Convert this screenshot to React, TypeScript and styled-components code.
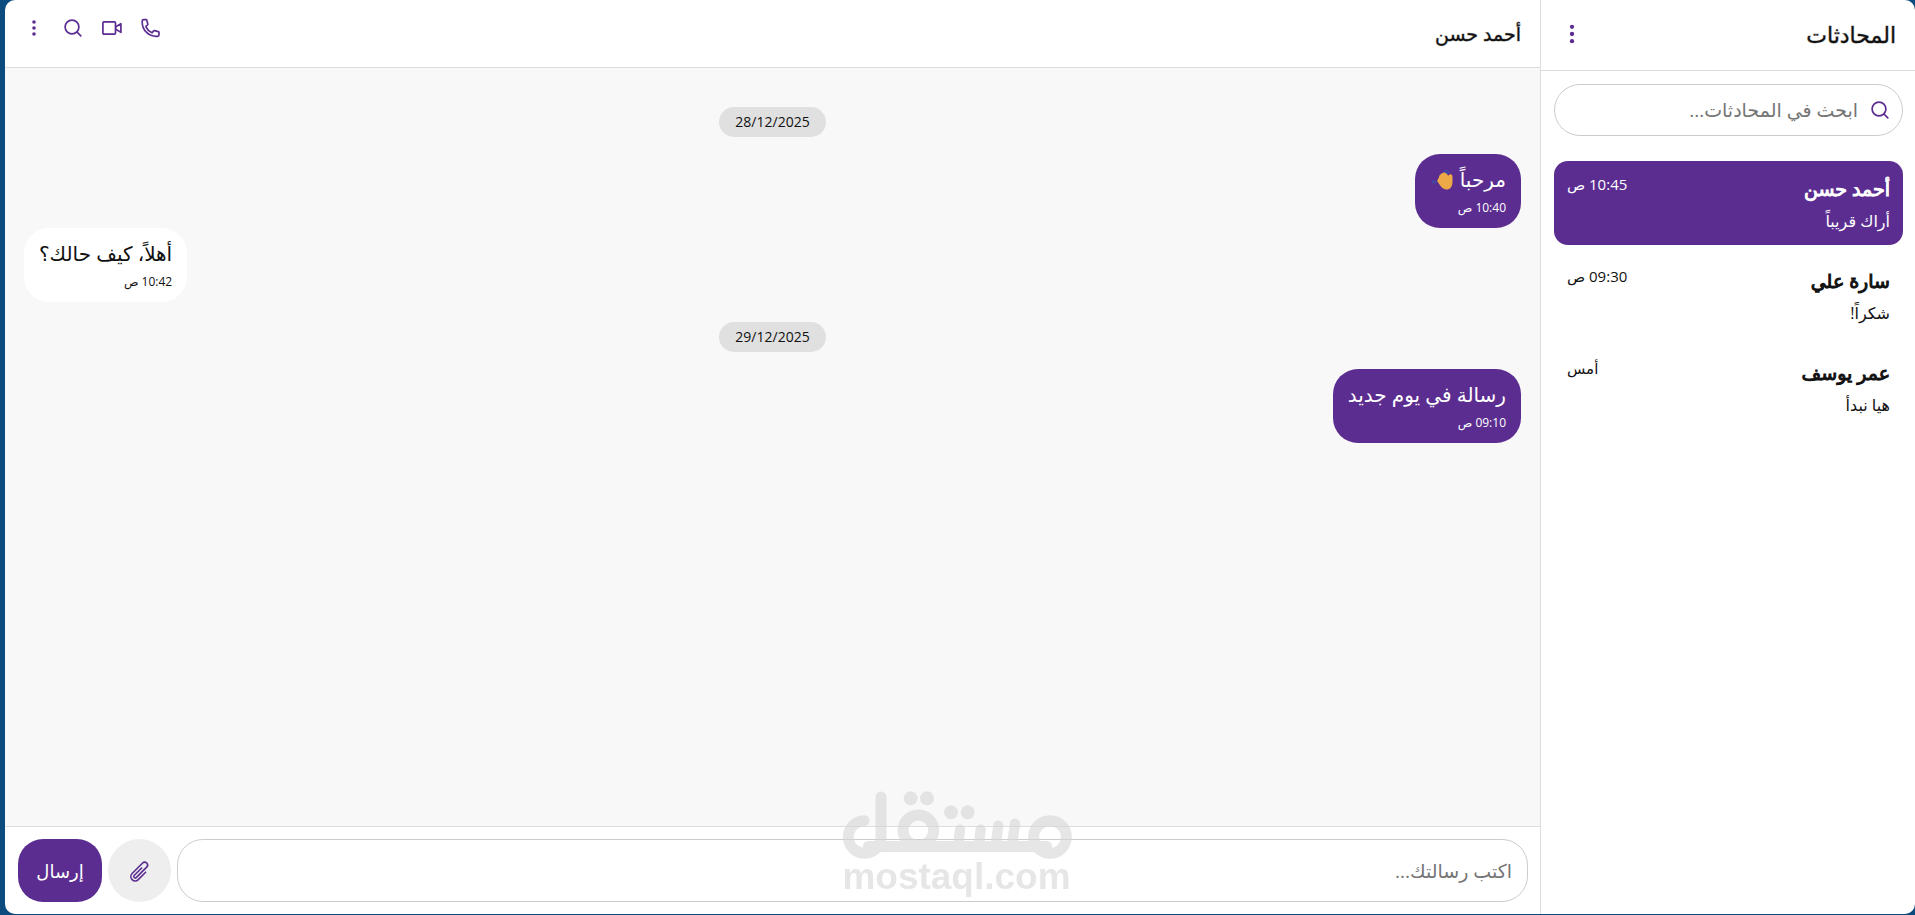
import React, { useState } from "react";
import styled, { createGlobalStyle } from "styled-components";

const purple = "#5c2d91";
const line = "#dddddd";
const fonts = `"Open Sans", "Noto Sans", "DejaVu Sans", sans-serif`;

const GlobalStyle = createGlobalStyle`
  *, *::before, *::after { box-sizing: border-box; }
  body {
    margin: 0;
    background: #0c4b7e;
    color: #111111;
    font-family: ${fonts};
  }
  button, input { font-family: inherit; color: inherit; }
  h1, h2, p, ul, ol { margin: 0; padding: 0; }
  ul, ol { list-style: none; }
`;

const Frame = styled.div`
  padding: 0 0 1px 5px;
  height: 100vh;
`;

const Shell = styled.div`
  display: flex;
  height: 100%;
  border-radius: 10px;
  overflow: hidden;
  background: #ffffff;
`;

const Sidebar = styled.aside`
  flex: 0 0 375px;
  border-inline-end: 1px solid ${line};
`;

const SidebarHeader = styled.header`
  display: flex;
  align-items: center;
  justify-content: space-between;
  height: 71px;
  padding: 0 19px 2px;
  border-bottom: 1px solid ${line};
`;

const SidebarTitle = styled.h1`
  font-size: 22px;
  font-weight: 500;
  line-height: 32px;
  -webkit-text-stroke: 1px rgba(17, 17, 17, 0.4);
`;

const IconButton = styled.button`
  display: grid;
  place-items: center;
  width: 24px;
  height: 24px;
  padding: 0;
  border: 0;
  background: none;
  color: ${purple};
  cursor: pointer;
`;

const SearchField = styled.label`
  display: flex;
  align-items: center;
  gap: 12px;
  height: 52px;
  margin: 13px 12px 25px 13px;
  padding: 0 12px;
  border: 1px solid #cccccc;
  border-radius: 26px;
  color: ${purple};
`;

const SearchInput = styled.input`
  flex: 1;
  min-width: 0;
  padding: 0;
  border: 0;
  outline: 0;
  background: none;
  color: #111111;
  font-size: 19px;
  &::placeholder { color: #757575; opacity: 1; }
`;

const ChatList = styled.ul`
  display: flex;
  flex-direction: column;
  gap: 8px;
  padding: 0 12px 0 13px;
`;

const ChatButton = styled.button<{ $active: boolean }>`
  display: flex;
  justify-content: space-between;
  align-items: flex-start;
  width: 100%;
  height: 84px;
  padding: 13px;
  border: 0;
  border-radius: 14px;
  background: ${(p) => (p.$active ? purple : "transparent")};
  color: ${(p) => (p.$active ? "#ffffff" : "#111111")};
  text-align: start;
  cursor: pointer;
`;

const ChatText = styled.span`
  display: flex;
  flex-direction: column;
  gap: 5px;
`;

const ChatName = styled.strong`
  font-size: 19px;
  font-weight: 500;
  line-height: 30px;
  -webkit-text-stroke: 1px currentColor;
`;

const ChatPreview = styled.span`
  font-size: 16px;
  line-height: 24px;
`;

const ChatTime = styled.span`
  font-size: 15px;
  line-height: 20px;
`;

const Conversation = styled.main`
  flex: 1;
  min-width: 0;
  display: flex;
  flex-direction: column;
`;

const ConversationHeader = styled.header`
  display: flex;
  justify-content: space-between;
  height: 68px;
  padding: 16px 19px 16px 17px;
  border-bottom: 1px solid ${line};
`;

const ContactName = styled.h2`
  font-size: 19px;
  font-weight: 500;
  line-height: 36px;
  -webkit-text-stroke: 1px rgba(17, 17, 17, 0.4);
`;

const Actions = styled.div`
  display: flex;
  gap: 15px;
`;

const Messages = styled.ol`
  flex: 1;
  display: flex;
  flex-direction: column;
  align-items: flex-start;
  padding: 19px;
  overflow: hidden;
  background: #f8f8f8;
`;

const DateChip = styled.li`
  align-self: center;
  margin: 20px 0 17px;
  padding: 0 16px;
  border-radius: 15px;
  background: #e0e0e0;
  font-size: 14px;
  line-height: 30px;
`;

const Bubble = styled.li<{ $own: boolean }>`
  align-self: ${(p) => (p.$own ? "flex-start" : "flex-end")};
  display: flex;
  flex-direction: column;
  gap: 2px;
  padding: 10px 15px;
  border-radius: 25px;
  background: ${(p) => (p.$own ? purple : "#ffffff")};
  color: ${(p) => (p.$own ? "#ffffff" : "#111111")};
`;

const BubbleText = styled.p`
  display: flex;
  align-items: center;
  gap: 6px;
  font-size: 20px;
  line-height: 32px;
`;

const BubbleTime = styled.time`
  font-size: 12px;
  line-height: 20px;
`;

const Composer = styled.form`
  display: flex;
  gap: 6px;
  padding: 12px 12px 12px 13px;
  border-top: 1px solid ${line};
`;

const MessageInput = styled.input`
  flex: 1;
  min-width: 0;
  height: 63px;
  padding: 0 15px;
  border: 1px solid #cccccc;
  border-radius: 26px;
  outline: 0;
  background: none;
  font-size: 19px;
  &::placeholder { color: #757575; opacity: 1; }
`;

const AttachButton = styled.button`
  display: grid;
  place-items: center;
  width: 63px;
  height: 63px;
  padding: 2px 0 0;
  border: 0;
  border-radius: 50%;
  background: #eeeeee;
  color: ${purple};
  cursor: pointer;
`;

const SendButton = styled.button`
  width: 84px;
  height: 63px;
  padding: 0;
  border: 0;
  border-radius: 25px;
  background: ${purple};
  color: #ffffff;
  font-size: 18px;
  cursor: pointer;
`;

const Watermark = styled.div`
  position: fixed;
  inset-inline: 0;
  bottom: 20px;
  display: flex;
  flex-direction: column;
  align-items: center;
  padding-right: 2px;
  opacity: 0.6;
  color: #d6d6d6;
  pointer-events: none;
`;

const WatermarkText = styled.span`
  font: bold 37px/36px "Liberation Sans", sans-serif;
`;

type IconProps = { size?: number; box?: number; children?: React.ReactNode };

const Icon = ({ size = 20, box = 20, children }: IconProps) => (
  <svg width={size} height={size} viewBox={`0 0 ${box} ${box}`} fill="none" stroke="currentColor"
    strokeWidth="1.7" strokeLinecap="round" strokeLinejoin="round" aria-hidden="true">
    {children}
  </svg>
);

const DotsIcon = ({ size }: { size?: number }) => (
  <Icon size={size}>
    <g fill="currentColor" stroke="none">
      <circle cx="10" cy="4" r="1.8" />
      <circle cx="10" cy="10" r="1.8" />
      <circle cx="10" cy="16" r="1.8" />
    </g>
  </Icon>
);

const SearchIcon = () => (
  <Icon>
    <circle cx="9" cy="9" r="6.9" />
    <path d="M14 14l3.8 3.8" />
  </Icon>
);

const VideoIcon = () => (
  <Icon>
    <rect x="0.9" y="3.9" width="12.6" height="12.2" rx="1" />
    <path d="M13.9 8.800l5-3.200v8.800l-5-3.200" />
  </Icon>
);

const PhoneIcon = () => (
  <Icon>
    <path d="M1.2 4.2c0 7.800 6.300 14.100 14.100 14.100h1.200c.8 0 1.500-.7 1.500-1.500v-2.200c0-.5-.3-.9-.8-1l-3.700-.9c-.4-.1-.9.1-1.100.4l-.8 1.100c-.2.3-.7.5-1 .3a11 11 0 0 1-5.600-5.600c-.1-.4 0-.8.3-1l1.100-.8c.3-.3.5-.7.4-1.100L5.900 2.500c-.1-.5-.5-.8-1-.8H2.700c-.8 0-1.500.7-1.500 1.500z" />
  </Icon>
);

const ClipIcon = () => (
  <Icon size={23} box={24}>
    <path d="m18.375 12.739-7.693 7.693a4.5 4.5 0 0 1-6.364-6.364l10.94-10.94A3 3 0 1 1 19.5 7.372L8.552 18.32m.009-.01-.01.01m5.699-9.941-7.81 7.81a1.5 1.5 0 0 0 2.112 2.13" />
  </Icon>
);

const WavingHand = () => (
  <svg width="24" height="22" viewBox="-2 0 24 22" aria-hidden="true">
    <path d="M7.5 6.5c2-2.4 4.6-3.7 6.5-2.5l2.3 2.7c.5-.9 1.4-1.7 3-1.3.9.2 1.200 1.200 1.200 3 0 4.700.5 9.500-3.500 11.600-3 1.600-6.500-.2-8.700-3.200L5.500 12.500c-.7-1 0-1.600.7-2-.4-1.300.2-1.600.9-1.700-.3-1 0-1.700.4-2.300z" fill="#eda847" />
    <path d="M12 2.2c2-1.6 4.800-.6 5 1.800M13 4c1.200-.8 2.300-.3 2.700.8M1 11.500c-.2 1.500.3 2.700 1.300 3.500M3.200 11.800c0 .9.300 1.600.9 2.200" fill="none" stroke="#1b6cc0" strokeWidth="0.9" />
  </svg>
);

const WatermarkLogo = () => (
  <svg width="230" height="68" viewBox="126 62 690 204" fill="none" stroke="currentColor"
    strokeWidth="33" strokeLinecap="round" aria-hidden="true">
    <path d="M192 151A49 49 0 1 0 243 200V80" />
    <path d="M205 228.5H740" />
    <circle cx="355" cy="180" r="46" />
    <circle cx="750" cy="200" r="49" />
    <path d="M480 178l-5 46M542 178l-5 46M595 166l-8 58M645 160l-9 64" strokeWidth="31" />
    <g fill="currentColor" stroke="none">
      <circle cx="332" cy="84" r="21" />
      <circle cx="381" cy="84" r="21" />
      <circle cx="453" cy="126" r="21" />
      <circle cx="503" cy="126" r="21" />
    </g>
  </svg>
);

const chats = [
  { name: "أحمد حسن", preview: "أراك قريباً", time: "10:45 ص" },
  { name: "سارة علي", preview: "شكراً!", time: "09:30 ص" },
  { name: "عمر يوسف", preview: "هيا نبدأ", time: "أمس" },
];

const days = [
  {
    date: "28/12/2025",
    messages: [
      { text: "مرحباً", wave: true, time: "10:40 ص", own: true },
      { text: "أهلاً، كيف حالك؟", wave: false, time: "10:42 ص", own: false },
    ],
  },
  {
    date: "29/12/2025",
    messages: [{ text: "رسالة في يوم جديد", wave: false, time: "09:10 ص", own: true }],
  },
];

export default function App() {
  const [active, setActive] = useState(0);

  return (
    <>
      <GlobalStyle />
      <Frame>
        <Shell dir="rtl" lang="ar">
          <Sidebar>
            <SidebarHeader>
              <SidebarTitle>المحادثات</SidebarTitle>
              <IconButton type="button" aria-label="القائمة"><DotsIcon size={24} /></IconButton>
            </SidebarHeader>
            <SearchField>
              <SearchIcon />
              <SearchInput type="text" placeholder="ابحث في المحادثات..." aria-label="ابحث في المحادثات" />
            </SearchField>
            <ChatList>
              {chats.map((chat, i) => (
                <li key={chat.name}>
                  <ChatButton type="button" $active={i === active} onClick={() => setActive(i)}>
                    <ChatText>
                      <ChatName>{chat.name}</ChatName>
                      <ChatPreview>{chat.preview}</ChatPreview>
                    </ChatText>
                    <ChatTime>{chat.time}</ChatTime>
                  </ChatButton>
                </li>
              ))}
            </ChatList>
          </Sidebar>

          <Conversation>
            <ConversationHeader>
              <ContactName>{chats[active].name}</ContactName>
              <Actions>
                <IconButton type="button" aria-label="مكالمة صوتية"><PhoneIcon /></IconButton>
                <IconButton type="button" aria-label="مكالمة فيديو"><VideoIcon /></IconButton>
                <IconButton type="button" aria-label="بحث"><SearchIcon /></IconButton>
                <IconButton type="button" aria-label="المزيد"><DotsIcon size={20} /></IconButton>
              </Actions>
            </ConversationHeader>
            <Messages>
              {days.map((day) => (
                <React.Fragment key={day.date}>
                  <DateChip>{day.date}</DateChip>
                  {day.messages.map((m) => (
                    <Bubble key={m.time} $own={m.own}>
                      <BubbleText>
                        {m.text}
                        {m.wave && <WavingHand />}
                      </BubbleText>
                      <BubbleTime>{m.time}</BubbleTime>
                    </Bubble>
                  ))}
                </React.Fragment>
              ))}
            </Messages>
            <Composer onSubmit={(e) => e.preventDefault()}>
              <MessageInput type="text" placeholder="اكتب رسالتك..." aria-label="اكتب رسالتك" />
              <AttachButton type="button" aria-label="إرفاق ملف"><ClipIcon /></AttachButton>
              <SendButton type="submit">إرسال</SendButton>
            </Composer>
          </Conversation>
        </Shell>
      </Frame>
      <Watermark>
        <WatermarkLogo />
        <WatermarkText>mostaql.com</WatermarkText>
      </Watermark>
    </>
  );
}
